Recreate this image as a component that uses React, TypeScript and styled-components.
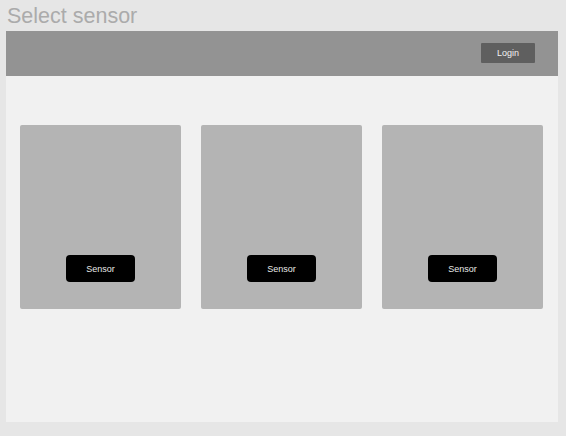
import React from 'react';
import styled, { createGlobalStyle } from 'styled-components';

const GlobalStyle = createGlobalStyle`
  html, body {
    margin: 0;
    padding: 0;
    background: #e6e6e6;
    font-family: "Liberation Sans", Arial, sans-serif;
  }
`;

const Page = styled.div`
  width: 566px;
  height: 436px;
  padding: 0 8px 0 6px;
  box-sizing: border-box;
  display: flex;
  flex-direction: column;
`;

const Title = styled.h1`
  margin: 0;
  height: 31px;
  padding: 4px 0 0 1px;
  box-sizing: border-box;
  font-size: 21.5px;
  font-weight: 400;
  line-height: 24px;
  color: #ababab;
`;

const Panel = styled.main`
  height: 391px;
  background: #f1f1f1;
  display: flex;
  flex-direction: column;
`;

const TopBar = styled.header`
  height: 45px;
  background: #939393;
  display: flex;
  align-items: center;
  justify-content: flex-end;
  padding-right: 23px;
`;

const LoginButton = styled.button`
  width: 54px;
  height: 20px;
  border: none;
  border-radius: 1px;
  background: #5f5f5f;
  color: #f2f2f2;
  font-family: inherit;
  font-size: 9px;
  padding: 0;
  margin-top: -2px;
`;

const Cards = styled.section`
  display: flex;
  gap: 20px;
  padding: 49px 15px 0 14px;
`;

const Card = styled.div`
  width: 161px;
  height: 184px;
  background: #b4b4b4;
  border-radius: 2px;
  display: flex;
  align-items: flex-end;
  justify-content: center;
  padding-bottom: 27px;
  box-sizing: border-box;
`;

const SensorButton = styled.button`
  width: 69px;
  height: 27px;
  border: none;
  border-radius: 4px;
  background: #000;
  color: #e8e8e8;
  font-family: inherit;
  font-size: 9px;
  padding: 0;
`;

const sensors = ['Sensor', 'Sensor', 'Sensor'];

export default function App() {
  return (
    <>
      <GlobalStyle />
      <Page>
        <Title>Select sensor</Title>
        <Panel>
          <TopBar>
            <LoginButton>Login</LoginButton>
          </TopBar>
          <Cards>
            {sensors.map((label, i) => (
              <Card key={i}>
                <SensorButton>{label}</SensorButton>
              </Card>
            ))}
          </Cards>
        </Panel>
      </Page>
    </>
  );
}
